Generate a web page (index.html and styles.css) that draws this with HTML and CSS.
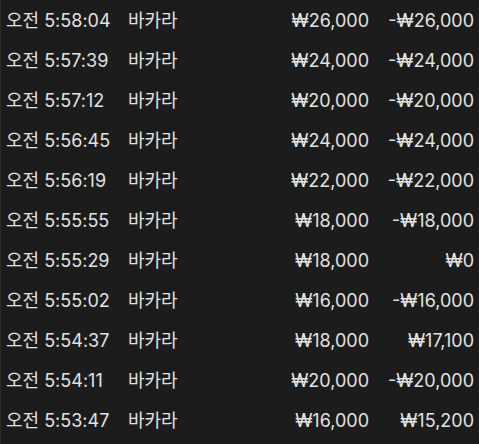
FILE: index.html
```html
<!DOCTYPE html>
<html lang="ko">
<head>
<meta charset="utf-8">
<link rel="stylesheet" href="styles.css">
</head>
<body>
<div class="list">
  <div class="row"><span class="time">오전 5:58:04</span><span class="game">바카라</span><span class="bet">₩26,000</span><span class="res">-₩26,000</span></div>
  <div class="row"><span class="time">오전 5:57:39</span><span class="game">바카라</span><span class="bet">₩24,000</span><span class="res">-₩24,000</span></div>
  <div class="row"><span class="time">오전 5:57:12</span><span class="game">바카라</span><span class="bet">₩20,000</span><span class="res">-₩20,000</span></div>
  <div class="row"><span class="time">오전 5:56:45</span><span class="game">바카라</span><span class="bet">₩24,000</span><span class="res">-₩24,000</span></div>
  <div class="row"><span class="time">오전 5:56:19</span><span class="game">바카라</span><span class="bet">₩22,000</span><span class="res">-₩22,000</span></div>
  <div class="row"><span class="time">오전 5:55:55</span><span class="game">바카라</span><span class="bet">₩18,000</span><span class="res">-₩18,000</span></div>
  <div class="row"><span class="time">오전 5:55:29</span><span class="game">바카라</span><span class="bet">₩18,000</span><span class="res">₩0</span></div>
  <div class="row"><span class="time">오전 5:55:02</span><span class="game">바카라</span><span class="bet">₩16,000</span><span class="res">-₩16,000</span></div>
  <div class="row"><span class="time">오전 5:54:37</span><span class="game">바카라</span><span class="bet">₩18,000</span><span class="res">₩17,100</span></div>
  <div class="row"><span class="time">오전 5:54:11</span><span class="game">바카라</span><span class="bet">₩20,000</span><span class="res">-₩20,000</span></div>
  <div class="row"><span class="time">오전 5:53:47</span><span class="game">바카라</span><span class="bet">₩16,000</span><span class="res">₩15,200</span></div>
</div>
</body>
</html>
```
FILE: styles.css
```css
html, body {
  margin: 0;
  padding: 0;
  background: #1c1c1c;
}
body {
  width: 479px;
  height: 444px;
  overflow: hidden;
  font-family: Inter, "Noto Sans CJK KR", sans-serif;
  font-size: 18px;
  color: #e2e2e2;
  border-left: 1px solid #2c2c2c;
  box-sizing: border-box;
}
.list {
  padding-top: 1px;
}
.row {
  display: grid;
  grid-template-columns: 122px 130px 111px 105px;
  height: 40px;
  line-height: 40px;
  padding-left: 5px;
  white-space: nowrap;
}
.bet, .res {
  text-align: right;
}
```
